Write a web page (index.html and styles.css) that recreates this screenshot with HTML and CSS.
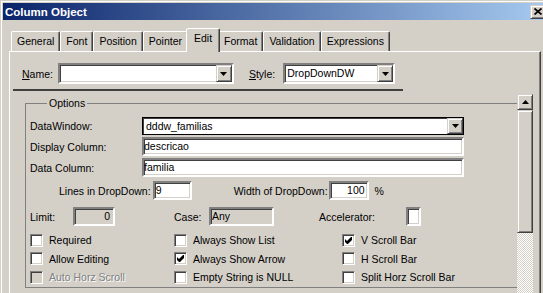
FILE: index.html
```html
<!DOCTYPE html>
<html lang="en">
<head>
  <meta charset="UTF-8">
  <title>Column Object</title>
  <link rel="stylesheet" href="styles.css">
</head>
<body>
<div class="window">
  <div class="caption">
    <span class="caption-title">Column Object</span>
    <span class="btn close-btn">
      <svg width="8" height="7" viewBox="0 0 8 7"><path d="M0.5 0.5 L7.5 6.5 M7.5 0.5 L0.5 6.5" stroke="#000" stroke-width="1.7" fill="none"/></svg>
    </span>
  </div>

  <div class="dialog">
    <div class="tabs">
      <span class="tab">General</span>
      <span class="tab">Font</span>
      <span class="tab">Position</span>
      <span class="tab">Pointer</span>
      <span class="tab active">Edit</span>
      <span class="tab">Format</span>
      <span class="tab">Validation</span>
      <span class="tab">Expressions</span>
    </div>

    <div class="page">
      <div class="name-row">
        <span class="name-label"><u>N</u>ame:</span>
        <div class="combo combo-name">
          <span class="combo-text"></span>
          <span class="btn drop-btn"><svg width="7" height="4" viewBox="0 0 7 4"><polygon points="0,0 7,0 3.5,4" fill="#000"/></svg></span>
        </div>
        <span class="style-label"><u>S</u>tyle:</span>
        <div class="combo combo-style">
          <span class="combo-text">DropDownDW</span>
          <span class="btn drop-btn"><svg width="7" height="4" viewBox="0 0 7 4"><polygon points="0,0 7,0 3.5,4" fill="#000"/></svg></span>
        </div>
      </div>

      <div class="separator"></div>

      <div class="scroll-area">
        <div class="scroll-view">
          <fieldset class="options">
            <legend>Options</legend>

            <div class="field-row">
              <span class="field-label">DataWindow:</span>
              <div class="combo combo-dw">
                <span class="combo-text">dddw_familias</span>
                <span class="btn drop-btn"><svg width="7" height="4" viewBox="0 0 7 4"><polygon points="0,0 7,0 3.5,4" fill="#000"/></svg></span>
              </div>
            </div>
            <div class="field-row">
              <span class="field-label">Display Column:</span>
              <span class="edit wide">descricao</span>
            </div>
            <div class="field-row">
              <span class="field-label">Data Column:</span>
              <span class="edit wide">familia</span>
            </div>

            <div class="size-row">
              <span>Lines in DropDown:</span>
              <span class="edit lines-edit">9</span>
              <span class="width-label">Width of DropDown:</span>
              <span class="edit width-edit">100</span>
              <span class="percent">%</span>
            </div>

            <div class="limit-row">
              <span class="limit-label">Limit:</span>
              <span class="edit disabled limit-edit">0</span>
              <span class="case-label">Case:</span>
              <span class="edit disabled case-edit">Any</span>
              <span class="accel-label">Accelerator:</span>
              <span class="edit accel-edit"></span>
            </div>

            <div class="checks">
              <div class="check-item"><span class="check"></span>Required</div>
              <div class="check-item"><span class="check"></span>Always Show List</div>
              <div class="check-item"><span class="check checked"><svg width="7" height="7" viewBox="0 0 7 7"><polygon points="0,2 2,4 6,0 7,0 7,3 3,7 2,7 0,5" fill="#000"/></svg></span>V Scroll Bar</div>

              <div class="check-item"><span class="check"></span>Allow Editing</div>
              <div class="check-item"><span class="check checked"><svg width="7" height="7" viewBox="0 0 7 7"><polygon points="0,2 2,4 6,0 7,0 7,3 3,7 2,7 0,5" fill="#000"/></svg></span>Always Show Arrow</div>
              <div class="check-item"><span class="check"></span>H Scroll Bar</div>

              <div class="check-item off"><span class="check"></span>Auto Horz Scroll</div>
              <div class="check-item"><span class="check"></span>Empty String is NULL</div>
              <div class="check-item"><span class="check"></span>Split Horz Scroll Bar</div>
            </div>
          </fieldset>
        </div>

        <div class="vscroll">
          <span class="btn scroll-btn"><svg width="7" height="4" viewBox="0 0 7 4"><polygon points="0,4 7,4 3.5,0" fill="#000"/></svg></span>
          <span class="btn scroll-thumb"></span>
          <span class="scroll-track"></span>
        </div>
      </div>
    </div>
  </div>
</div>
</body>
</html>
```

FILE: styles.css
```css
body {
  margin: 0;
  background: #d4d0c8;
  font-family: "Liberation Sans", Arial, sans-serif;
  font-size: 10.5px;
  color: #000;
}

/* window frame, cut off at the right and bottom like the screenshot */
.window {
  width: 543px;
  height: 293px;
  overflow: hidden;
  box-sizing: border-box;
  padding: 3px 0 0 3px;
  box-shadow: inset 1px 1px #d4d0c8, inset 2px 2px #fff;
}

.caption {
  display: flex;
  align-items: center;
  width: 545px;
  height: 17px;
  box-sizing: border-box;
  padding-left: 2px;
  background: linear-gradient(to right, #0a246a, #a6caf0);
}
.caption-title {
  color: #fff;
  font-weight: bold;
  font-size: 11.5px;
}

/* raised 3d button look */
.btn {
  display: flex;
  align-items: center;
  justify-content: center;
  box-sizing: border-box;
  background: #d4d0c8;
  border: 1px solid;
  border-color: #d4d0c8 #404040 #404040 #d4d0c8;
  box-shadow: inset 1px 1px #fff, inset -1px -1px #808080;
}
.close-btn {
  flex-shrink: 0;
  margin-left: auto;
  margin-right: 2px;
  width: 16px;
  height: 14px;
}

.dialog {
  padding: 8px 0 0 6px;
}

/* tabs */
.tabs {
  display: flex;
  align-items: flex-end;
  height: 23px;
  padding-left: 2px;
}
.tab {
  height: 20px;
  box-sizing: border-box;
  padding: 0 5px;
  line-height: 18px;
  border: 1px solid;
  border-bottom: none;
  border-color: #fff #404040 transparent #fff;
  border-radius: 2px 2px 0 0;
  box-shadow: inset -1px 0 #808080;
}
.tab.active {
  height: 24px;
  margin: 0 -2px -1px;
  padding: 0 7px;
  position: relative;
  z-index: 1;
  background: #d4d0c8;
}

/* tab page */
.page {
  width: 532px;
  height: 242px;
  box-sizing: border-box;
  border-top: 1px solid #fff;
  border-left: 1px solid #fff;
  border-right: 1px solid #404040;
  box-shadow: inset -1px 0 #808080;
}

.name-row {
  display: flex;
  align-items: center;
  height: 21px;
  margin-top: 11px;
  padding-left: 12px;
}
.name-label {
  margin-right: 5px;
}
.style-label {
  margin-left: 15px;
  margin-right: 8px;
}

/* sunken fields */
.combo, .edit {
  box-sizing: border-box;
  background: #fff;
  border: 2px solid;
  border-color: #808080 #fff #fff #808080;
  box-shadow: inset 1px 1px #404040, inset -1px -1px #d4d0c8;
}
.combo {
  display: flex;
  height: 21px;
}
.combo-text {
  flex: 1;
  padding-left: 2px;
  line-height: 17px;
}
.drop-btn {
  width: 16px;
}
.combo-name {
  width: 176px;
}
.combo-style {
  width: 112px;
}
.combo-dw {
  width: 322px;
  height: 18px;
  border: 1px solid #000;
  box-shadow: inset 1px 1px #404040;
}
.combo-dw .combo-text {
  padding-left: 3px;
  line-height: 16px;
}

.edit {
  display: block;
  height: 19px;
  line-height: 15px;
  white-space: nowrap;
}
.edit.disabled {
  background: #d4d0c8;
}

.separator {
  width: 390px;
  height: 2px;
  margin: 5px 0 3px 3px;
  background: #404040;
}

/* scrolling area with the options group */
.scroll-area {
  display: flex;
  height: 199px;
}
.scroll-view {
  flex: 1;
  overflow: hidden;
}
.vscroll {
  width: 16px;
  margin-right: 7px;
  display: flex;
  flex-direction: column;
}
.scroll-btn {
  height: 16px;
}
.scroll-thumb {
  height: 123px;
}
.scroll-track {
  flex: 1;
  background-image: conic-gradient(#fff 25%, #d4d0c8 0 50%, #fff 0 75%, #d4d0c8 0);
  background-size: 2px 2px;
}

.options {
  width: 520px;
  min-width: 0;
  box-sizing: border-box;
  margin: 3px 0 0 15px;
  padding: 6px 0 0 4px;
  border: 1px solid #808080;
}
.options legend {
  margin-left: 17px;
  padding: 0 2px;
  line-height: 13px;
}

.field-row {
  display: flex;
  align-items: center;
  height: 19px;
  margin-bottom: 2px;
}
.field-label {
  width: 112px;
}
.wide {
  width: 322px;
}

.size-row, .limit-row {
  display: flex;
  align-items: center;
  height: 19px;
}
.size-row {
  margin-top: 4px;
  padding-left: 29px;
}
.lines-edit {
  width: 39px;
  margin-left: 2px;
  padding-left: 1px;
}
.width-label {
  margin-left: 42px;
}
.width-edit {
  width: 40px;
  margin-left: 1px;
  padding-right: 2px;
  text-align: right;
}
.percent {
  margin-left: 6px;
}

.limit-row {
  margin-top: 7px;
}
.limit-label {
  width: 43px;
}
.limit-edit {
  width: 42px;
  padding-right: 3px;
  text-align: right;
}
.case-label {
  width: 35px;
  margin-left: 59px;
}
.case-edit {
  width: 65px;
  padding-left: 1px;
}
.accel-label {
  width: 87px;
  margin-left: 45px;
}
.accel-edit {
  width: 15px;
}

/* check boxes */
.checks {
  display: grid;
  grid-template-columns: 144px 168px 1fr;
  grid-auto-rows: 18.5px;
  margin-top: 5px;
}
.check-item {
  display: flex;
  align-items: center;
  white-space: nowrap;
}
.check {
  display: flex;
  align-items: center;
  justify-content: center;
  width: 13px;
  height: 13px;
  box-sizing: border-box;
  margin-right: 6px;
  background: #fff;
  border: 1px solid;
  border-color: #808080 #fff #fff #808080;
  box-shadow: inset 1px 1px #404040, inset -1px -1px #d4d0c8;
}
.check-item.off {
  color: #808080;
  text-shadow: 1px 1px #fff;
}
.check-item.off .check {
  background: #d4d0c8;
}
```
